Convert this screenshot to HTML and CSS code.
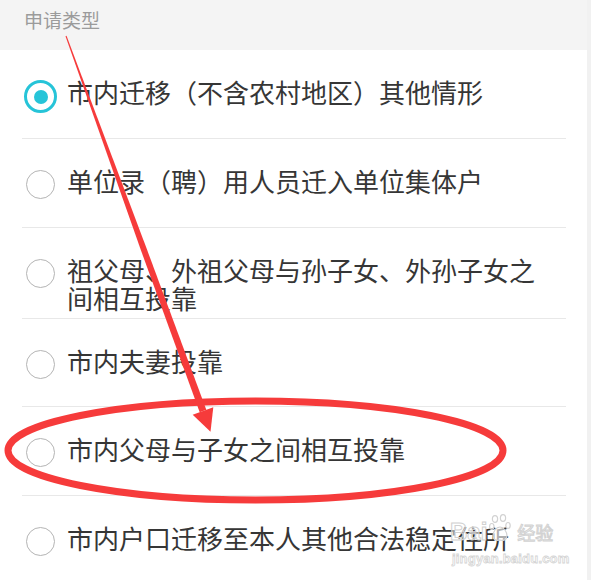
FILE: index.html
```html
<!DOCTYPE html>
<html lang="zh-CN">
<head>
<meta charset="utf-8">
<title>申请类型</title>
<link rel="stylesheet" href="styles.css">
</head>
<body>
<div class="page">
  <div class="panel">
    <div class="header">申请类型</div>
    <ul class="options">
      <li class="row"><span class="radio checked"></span><span class="label">市内迁移（不含农村地区）其他情形</span></li>
      <li class="row"><span class="radio"></span><span class="label">单位录（聘）用人员迁入单位集体户</span></li>
      <li class="row"><span class="radio"></span><span class="label">祖父母、外祖父母与孙子女、外孙子女之间相互投靠</span></li>
      <li class="row"><span class="radio"></span><span class="label">市内夫妻投靠</span></li>
      <li class="row"><span class="radio"></span><span class="label">市内父母与子女之间相互投靠</span></li>
      <li class="row"><span class="radio"></span><span class="label">市内户口迁移至本人其他合法稳定住所</span></li>
    </ul>
  </div>
  <div class="strip"></div>
</div>

<svg class="annot" width="591" height="580" viewBox="0 0 591 580" xmlns="http://www.w3.org/2000/svg">
  <ellipse cx="255.5" cy="450.5" rx="247.5" ry="49.5" fill="none" stroke="#f63b3b" stroke-width="7"/>
  <polygon points="66.5,35.8 146.8,249.0 206.3,409.8 199.7,412.2 141.2,251.0 65.5,36.2" fill="#f63b3b"/>
  <polygon points="213.3,407.2 210.5,431.7 192.7,414.8" fill="#f63b3b"/>
</svg>

<div class="watermark">
  <div class="wm-top">
    <span class="wm-bai">Bai</span>
    <svg class="wm-paw" width="22" height="30" viewBox="0 0 22 30" xmlns="http://www.w3.org/2000/svg">
      <g fill="rgba(255,255,255,0.6)" stroke="#d2d2d2" stroke-width="1.2">
        <ellipse cx="6" cy="5" rx="2.6" ry="3.4"/>
        <ellipse cx="14" cy="4" rx="2.6" ry="3.4"/>
        <ellipse cx="2.8" cy="12.5" rx="2.2" ry="3"/>
        <ellipse cx="19" cy="11.5" rx="2.2" ry="3"/>
        <path d="M11 13 C7 13 4 18 4 22 C4 26 8 27 11 26 C14 27 18 26 18 22 C18 18 15 13 11 13 Z"/>
      </g>
    </svg>
    <span class="wm-jy">经验</span>
  </div>
  <div class="wm-url">jingyan.baidu.com</div>
</div>
</body>
</html>
```

FILE: styles.css
```css
html, body {
  margin: 0;
  padding: 0;
}

body {
  width: 591px;
  height: 580px;
  overflow: hidden;
  background: #f3f3f3;
  font-family: "Noto Sans CJK SC", "Noto Sans", sans-serif;
  position: relative;
}

.page {
  display: flex;
  height: 580px;
}

.panel {
  width: 587px;
  background: #ffffff;
  display: flex;
  flex-direction: column;
  overflow: hidden;
}

.strip {
  width: 4px;
  background: #f1f1f1;
}

.header {
  flex: none;
  height: 50px;
  box-sizing: border-box;
  background: #f4f4f4;
  color: #9b9b9b;
  font-size: 19px;
  line-height: 28px;
  padding: 6px 24px 0;
}

.options {
  flex: none;
  list-style: none;
  margin: 0 21px 0 22px;
  padding: 0;
}

.row {
  display: flex;
  align-items: flex-start;
  box-sizing: border-box;
  min-height: 88.5px;
  padding: 28px 0 6px;
  border-top: 1px solid #e8e8e8;
}

.row:first-child {
  border-top: none;
  min-height: 88px;
}

.radio {
  flex: none;
  box-sizing: border-box;
  width: 29px;
  height: 29px;
  margin: 3px 12px 0 4px;
  border: 1.5px solid #b4b4b4;
  border-radius: 50%;
  display: flex;
  align-items: center;
  justify-content: center;
}

.radio.checked {
  width: 33px;
  height: 33px;
  margin: 2px 10px 0 2px;
  border: 3px solid #26c4d8;
}

.radio.checked::after {
  content: "";
  width: 14px;
  height: 14px;
  border-radius: 50%;
  background: #26c4d8;
}

.label {
  font-size: 26px;
  line-height: 28px;
  color: #363636;
  width: 482px;
}

.annot {
  position: absolute;
  left: 0;
  top: 0;
  pointer-events: none;
}

.watermark {
  position: absolute;
  left: 450px;
  top: 512px;
  display: flex;
  flex-direction: column;
  align-items: flex-start;
  pointer-events: none;
}

.wm-top {
  display: flex;
  align-items: flex-end;
  gap: 2px;
  height: 34px;
}

.wm-bai {
  font-family: "Liberation Sans", sans-serif;
  font-weight: bold;
  font-size: 24px;
  line-height: 28px;
  color: rgba(255, 255, 255, 0.5);
  -webkit-text-stroke: 1px #d0d0d0;
}

.wm-paw {
  margin-bottom: 2px;
}

.wm-jy {
  font-size: 18px;
  line-height: 24px;
  margin-left: 4px;
  margin-bottom: 2px;
  color: rgba(255, 255, 255, 0.5);
  -webkit-text-stroke: 1px #d2d2d2;
}

.wm-url {
  font-family: "Liberation Sans", sans-serif;
  font-weight: bold;
  font-size: 13px;
  line-height: 16px;
  margin-top: 5px;
  margin-left: 2px;
  color: rgba(255, 255, 255, 0.5);
  -webkit-text-stroke: 0.8px #d4d4d4;
  letter-spacing: 0.2px;
}
```
